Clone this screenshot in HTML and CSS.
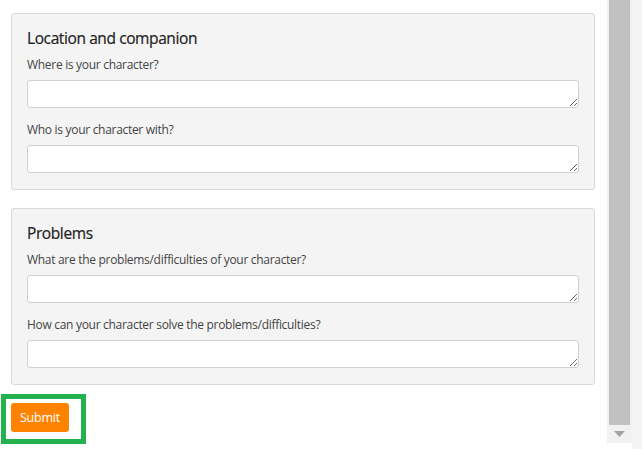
FILE: index.html
```html
<!DOCTYPE html>
<html lang="en">
<head>
<meta charset="utf-8">
<title>Character form</title>
<link rel="stylesheet" href="styles.css">
</head>
<body>
<div class="page">
  <main class="content">
    <section class="card">
      <h2 class="card-title">Location and companion</h2>
      <label class="field">
        <span class="field-label">Where is your character?</span>
        <textarea class="field-input"></textarea>
      </label>
      <label class="field">
        <span class="field-label">Who is your character with?</span>
        <textarea class="field-input"></textarea>
      </label>
    </section>
    <section class="card">
      <h2 class="card-title">Problems</h2>
      <label class="field">
        <span class="field-label">What are the problems/difficulties of your character?</span>
        <textarea class="field-input"></textarea>
      </label>
      <label class="field">
        <span class="field-label">How can your character solve the problems/difficulties?</span>
        <textarea class="field-input"></textarea>
      </label>
    </section>
    <div class="submit-wrap">
      <button class="submit-btn" type="button">Submit</button>
    </div>
  </main>
  <div class="scrollbar">
    <div class="scroll-thumb"></div>
    <div class="scroll-arrow">
      <svg width="11" height="6" viewBox="0 0 11 6"><polygon points="0,0 11,0 5.5,6" fill="#a3a3a3"/></svg>
    </div>
  </div>
  <div class="edge"></div>
</div>
</body>
</html>
```
FILE: styles.css
```css
html, body {
  margin: 0;
  padding: 0;
  height: 100%;
  overflow: hidden;
  background: #ffffff;
}

body {
  font-family: "Open Sans", "Noto Sans", sans-serif;
  color: #333333;
}

.page {
  display: flex;
  height: 449px;
}

.content {
  width: 607px;
  box-sizing: border-box;
  padding: 13px 12px 0 11px;
  display: flex;
  flex-direction: column;
  align-items: stretch;
}

.card {
  background: #f4f4f4;
  border: 1px solid #d9d9d9;
  border-radius: 3px;
  padding: 14px 15px 16px 15px;
  margin-bottom: 18px;
}

.card:last-of-type {
  margin-bottom: 9px;
}

.card-title {
  margin: 0 0 9px 0;
  font-size: 15.5px;
  line-height: 20px;
  font-weight: 500;
  letter-spacing: -0.4px;
  color: #222222;
  -webkit-text-stroke: 0.2px #222222;
}

.field {
  display: flex;
  flex-direction: column;
  margin-top: 14px;
}

.card-title + .field {
  margin-top: 0;
}

.field-label {
  font-size: 12px;
  line-height: 16px;
  letter-spacing: -0.3px;
  color: #444444;
  margin-bottom: 7px;
}

.field-input {
  display: block;
  box-sizing: border-box;
  width: 100%;
  height: 28px;
  margin: 0;
  border: 1px solid #cdd2d9;
  border-radius: 3px;
  background: #ffffff;
  font-family: inherit;
  font-size: 12px;
  padding: 4px 6px;
}

.submit-wrap {
  align-self: flex-start;
  margin-left: -10px;
  border: 5px solid #22b14c;
  padding: 4px 12px 7px 5px;
  display: flex;
}

.submit-btn {
  height: 29px;
  width: 58px;
  padding: 0;
  border: none;
  border-radius: 3px;
  background: #ff8300;
  color: #ffffff;
  font-family: inherit;
  font-size: 12.5px;
  letter-spacing: -0.2px;
}

.scrollbar {
  width: 25px;
  height: 443px;
  background: #f1f1f1;
  display: flex;
  flex-direction: column;
}

.scroll-thumb {
  margin: 0 2px;
  height: 425px;
  background: #c1c1c1;
}

.scroll-arrow {
  flex: 1;
  display: flex;
  align-items: center;
  justify-content: center;
}

.edge {
  flex: 1;
  background: #f4f4f4;
}
```
